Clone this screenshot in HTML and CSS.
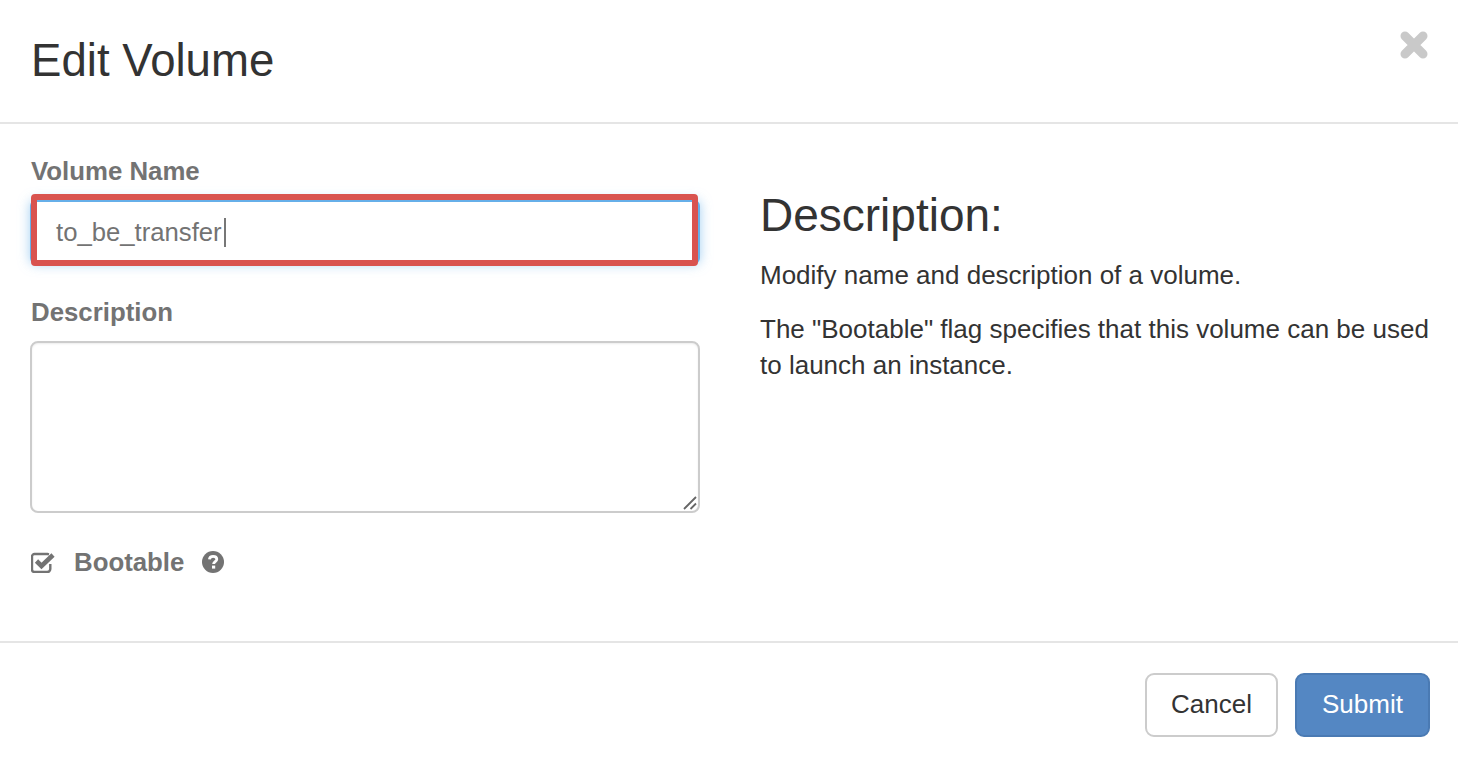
FILE: index.html
```html
<!DOCTYPE html>
<html lang="en">
<head>
<meta charset="utf-8">
<title>Edit Volume</title>
<link rel="stylesheet" href="styles.css">
</head>
<body>
<div class="modal">
  <header class="modal-header">
    <h3 class="modal-title">Edit Volume</h3>
    <svg class="close-icon" viewBox="0 0 28 28" aria-label="Close"><path d="M5 5 L23 23 M23 5 L5 23" fill="none" stroke="#c9c9c9" stroke-width="9" stroke-linecap="round"/></svg>
  </header>
  <main class="modal-body">
    <form class="form-col">
      <div class="field field-name">
        <label class="field-label">Volume Name</label>
        <div class="input-wrap">
          <div class="text-input"><span>to_be_transfer</span><i class="caret"></i></div>
          <div class="highlight"></div>
        </div>
      </div>
      <div class="field field-desc">
        <label class="field-label">Description</label>
        <div class="textarea">
          <svg class="grip" viewBox="0 0 14 14"><path d="M1 13 L13 1 M7.5 13 L13 7.5" stroke="#666" stroke-width="1.8" fill="none"/></svg>
        </div>
      </div>
      <div class="check-row">
        <svg class="check-icon" viewBox="0 0 24 21"><path d="M19.3 12 V17 A3 3 0 0 1 16.3 20 H3.5 A2.5 2.5 0 0 1 1 17.5 V4.5 A2.5 2.5 0 0 1 3.5 2 H16.5 L18 2.4" fill="none" stroke="#737373" stroke-width="2.4"/><path d="M5.5 9 L10.5 14 L22 3" fill="none" stroke="#737373" stroke-width="4.6"/></svg>
        <span class="check-label">Bootable</span>
        <svg class="help-icon" viewBox="0 0 22 22"><circle cx="11" cy="11" r="11" fill="#737373"/><path d="M7.4 8.4 C7.6 6.3 9.2 5.3 11.1 5.3 C13.2 5.3 14.8 6.5 14.8 8.3 C14.8 10.6 11.6 10.7 11.6 13" fill="none" stroke="#fff" stroke-width="2.8"/><rect x="10" y="14.6" width="3.2" height="3" fill="#fff"/></svg>
      </div>
    </form>
    <aside class="info-col">
      <h3 class="info-title">Description:</h3>
      <p class="info-text">Modify name and description of a volume.</p>
      <p class="info-text">The "Bootable" flag specifies that this volume can be used to launch an instance.</p>
    </aside>
  </main>
  <footer class="modal-footer">
    <button class="btn btn-default" type="button">Cancel</button>
    <button class="btn btn-primary" type="button">Submit</button>
  </footer>
</div>
</body>
</html>
```
FILE: styles.css
```css
* { box-sizing: border-box; }
html, body { margin: 0; height: 100%; background: #fff; }
body { font-family: "Liberation Sans", Arial, sans-serif; color: #333; overflow: hidden; }
.modal { height: 762px; display: flex; flex-direction: column; }
.modal-header { height: 124px; flex: none; border-bottom: 2px solid #e5e5e5; padding: 31px 30px 0 31px; display: flex; justify-content: space-between; align-items: flex-start; }
.modal-title { margin: 1px 0 0; font-size: 45.6px; line-height: 58px; font-weight: 400; color: #333; }
.close-icon { width: 28px; height: 28px; }
.modal-body { height: 517px; flex: none; display: flex; padding-left: 30px; padding-right: 28px; }
.form-col { width: 670px; flex: none; display: flex; flex-direction: column; }
.field-label { display: block; font-size: 25.8px; line-height: 30px; font-weight: 700; color: #737373; padding-left: 1px; }
.field-name { padding-top: 32px; }
.input-wrap { position: relative; margin-top: 14px; }
.text-input { height: 64px; border: 2px solid #66afe9; border-radius: 6px; box-shadow: 0 0 12px rgba(102,175,233,.6); padding: 0 24px; display: flex; align-items: center; font-size: 25.7px; color: #737373; background: #fff; }
.caret { display: inline-block; width: 2px; height: 29px; background: #777; margin-left: 2px; }
.highlight { position: absolute; left: 1px; top: -6px; width: 667px; height: 72px; border: 6px solid #d9534f; border-radius: 4px; }
.field-desc { padding-top: 33px; }
.textarea { position: relative; height: 172px; margin-top: 14px; border: 2px solid #ccc; border-radius: 8px; box-shadow: inset 0 1px 2px rgba(0,0,0,.075); background: #fff; }
.grip { position: absolute; right: 1px; bottom: 1px; width: 14px; height: 14px; }
.check-row { display: flex; align-items: center; margin-top: 33px; height: 32px; padding-left: 1px; }
.check-icon { width: 24px; height: 21px; }
.check-label { margin-left: 19px; font-size: 25.8px; font-weight: 700; color: #737373; }
.help-icon { width: 22px; height: 22px; margin-left: 18px; }
.info-col { margin-left: 60px; flex: 1; padding-top: 60px; }
.info-title { margin: 0 0 11px; font-size: 46px; line-height: 62px; font-weight: 400; color: #333; }
.info-text { margin: 0 0 18px; font-size: 26px; line-height: 36px; color: #333; }
.modal-footer { flex: 1; border-top: 2px solid #e5e5e5; padding: 30px 28px 0 0; display: flex; justify-content: flex-end; align-items: flex-start; gap: 17px; }
.btn { height: 64px; border-radius: 9px; font-family: inherit; font-size: 26px; padding: 0 0 2px; }
.btn-default { width: 133px; background: #fff; border: 2px solid #ccc; color: #333; }
.btn-primary { width: 135px; background: #5487c3; border: 2px solid #4a7ab3; color: #fff; }
```
